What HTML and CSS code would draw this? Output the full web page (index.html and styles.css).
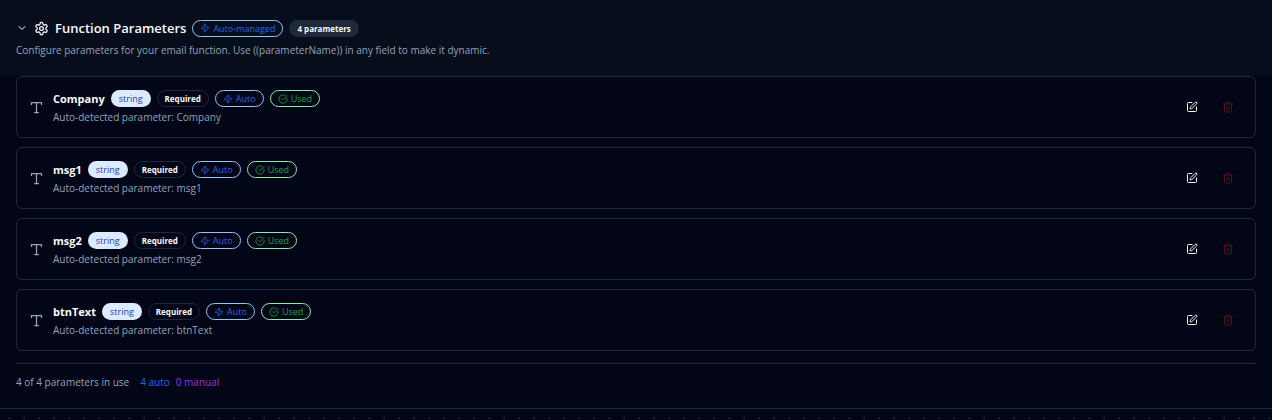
FILE: index.html
```html
<!DOCTYPE html>
<html lang="en">
<head>
    <meta charset="UTF-8">
    <title>Function Parameters</title>
    <meta name="viewport" content="width=device-width, initial-scale=1.0">
    <link rel="stylesheet" href="styles.css">
</head>
<body>

    <!-- Shared icons -->
    <svg class="sprite" aria-hidden="true">
        <symbol id="icon-chevron" viewBox="0 0 24 24"><path d="m6 9 6 6 6-6"/></symbol>
        <symbol id="icon-settings" viewBox="0 0 24 24">
            <path d="M12.22 2h-.44a2 2 0 0 0-2 2v.18a2 2 0 0 1-1 1.73l-.43.25a2 2 0 0 1-2 0l-.15-.08a2 2 0 0 0-2.73.73l-.22.38a2 2 0 0 0 .73 2.73l.15.1a2 2 0 0 1 1 1.72v.51a2 2 0 0 1-1 1.74l-.15.09a2 2 0 0 0-.73 2.73l.22.38a2 2 0 0 0 2.73.73l.15-.08a2 2 0 0 1 2 0l.43.25a2 2 0 0 1 1 1.73V20a2 2 0 0 0 2 2h.44a2 2 0 0 0 2-2v-.18a2 2 0 0 1 1-1.73l.43-.25a2 2 0 0 1 2 0l.15.08a2 2 0 0 0 2.73-.73l.22-.39a2 2 0 0 0-.73-2.73l-.15-.08a2 2 0 0 1-1-1.74v-.5a2 2 0 0 1 1-1.74l.15-.09a2 2 0 0 0 .73-2.73l-.22-.38a2 2 0 0 0-2.73-.73l-.15.08a2 2 0 0 1-2 0l-.43-.25a2 2 0 0 1-1-1.73V4a2 2 0 0 0-2-2z"/>
            <circle cx="12" cy="12" r="3"/>
        </symbol>
        <symbol id="icon-zap" viewBox="0 0 24 24"><path d="M4 14a1 1 0 0 1-.78-1.63l9.9-10.2a.5.5 0 0 1 .86.46l-1.92 6.02A1 1 0 0 0 13 10h7a1 1 0 0 1 .78 1.63l-9.9 10.2a.5.5 0 0 1-.86-.46l1.92-6.02A1 1 0 0 0 11 14z"/></symbol>
        <symbol id="icon-check" viewBox="0 0 24 24"><path d="M21.801 10A10 10 0 1 1 17 3.335"/><path d="m9 11 3 3L22 4"/></symbol>
        <symbol id="icon-type" viewBox="0 0 24 24"><path d="M4 7V4h16v3"/><path d="M9 20h6"/><path d="M12 4v16"/></symbol>
        <symbol id="icon-edit" viewBox="0 0 24 24">
            <path d="M12 3H5a2 2 0 0 0-2 2v14a2 2 0 0 0 2 2h14a2 2 0 0 0 2-2v-7"/>
            <path d="M18.375 2.625a1 1 0 0 1 3 3l-9.013 9.014a2 2 0 0 1-.853.505l-2.873.84a.5.5 0 0 1-.62-.62l.84-2.873a2 2 0 0 1 .506-.852z"/>
        </symbol>
        <symbol id="icon-trash" viewBox="0 0 24 24">
            <path d="M3 6h18"/><path d="M19 6v14c0 1-1 2-2 2H7c-1 0-2-1-2-2V6"/>
            <path d="M8 6V4c0-1 1-2 2-2h4c1 0 2 1 2 2v2"/><path d="M10 11v6"/><path d="M14 11v6"/>
        </symbol>
    </svg>

    <section class="panel">
        <header class="panel-header">
            <div class="title-row">
                <button class="toggle" aria-label="Collapse"><svg class="icon"><use href="#icon-chevron"/></svg></button>
                <svg class="icon icon-settings"><use href="#icon-settings"/></svg>
                <h1>Function Parameters</h1>
                <span class="badge badge-auto"><svg class="icon icon-badge"><use href="#icon-zap"/></svg>Auto-managed</span>
                <span class="badge badge-count">4 parameters</span>
            </div>
            <p class="description">Configure parameters for your email function. Use ((parameterName)) in any field to make it dynamic.</p>
        </header>

        <div class="panel-content">
            <ul class="parameters">
                <li class="parameter">
                    <svg class="icon icon-type"><use href="#icon-type"/></svg>
                    <div class="details">
                        <div class="name-row">
                            <h2>Company</h2>
                            <span class="badge badge-type">string</span>
                            <span class="badge badge-required">Required</span>
                            <span class="badge badge-auto"><svg class="icon icon-badge"><use href="#icon-zap"/></svg>Auto</span>
                            <span class="badge badge-used"><svg class="icon icon-badge"><use href="#icon-check"/></svg>Used</span>
                        </div>
                        <p>Auto-detected parameter: Company</p>
                    </div>
                    <div class="actions">
                        <button aria-label="Edit Company"><svg class="icon"><use href="#icon-edit"/></svg></button>
                        <button class="delete" aria-label="Delete Company" disabled><svg class="icon"><use href="#icon-trash"/></svg></button>
                    </div>
                </li>
                <li class="parameter">
                    <svg class="icon icon-type"><use href="#icon-type"/></svg>
                    <div class="details">
                        <div class="name-row">
                            <h2>msg1</h2>
                            <span class="badge badge-type">string</span>
                            <span class="badge badge-required">Required</span>
                            <span class="badge badge-auto"><svg class="icon icon-badge"><use href="#icon-zap"/></svg>Auto</span>
                            <span class="badge badge-used"><svg class="icon icon-badge"><use href="#icon-check"/></svg>Used</span>
                        </div>
                        <p>Auto-detected parameter: msg1</p>
                    </div>
                    <div class="actions">
                        <button aria-label="Edit msg1"><svg class="icon"><use href="#icon-edit"/></svg></button>
                        <button class="delete" aria-label="Delete msg1" disabled><svg class="icon"><use href="#icon-trash"/></svg></button>
                    </div>
                </li>
                <li class="parameter">
                    <svg class="icon icon-type"><use href="#icon-type"/></svg>
                    <div class="details">
                        <div class="name-row">
                            <h2>msg2</h2>
                            <span class="badge badge-type">string</span>
                            <span class="badge badge-required">Required</span>
                            <span class="badge badge-auto"><svg class="icon icon-badge"><use href="#icon-zap"/></svg>Auto</span>
                            <span class="badge badge-used"><svg class="icon icon-badge"><use href="#icon-check"/></svg>Used</span>
                        </div>
                        <p>Auto-detected parameter: msg2</p>
                    </div>
                    <div class="actions">
                        <button aria-label="Edit msg2"><svg class="icon"><use href="#icon-edit"/></svg></button>
                        <button class="delete" aria-label="Delete msg2" disabled><svg class="icon"><use href="#icon-trash"/></svg></button>
                    </div>
                </li>
                <li class="parameter">
                    <svg class="icon icon-type"><use href="#icon-type"/></svg>
                    <div class="details">
                        <div class="name-row">
                            <h2>btnText</h2>
                            <span class="badge badge-type">string</span>
                            <span class="badge badge-required">Required</span>
                            <span class="badge badge-auto"><svg class="icon icon-badge"><use href="#icon-zap"/></svg>Auto</span>
                            <span class="badge badge-used"><svg class="icon icon-badge"><use href="#icon-check"/></svg>Used</span>
                        </div>
                        <p>Auto-detected parameter: btnText</p>
                    </div>
                    <div class="actions">
                        <button aria-label="Edit btnText"><svg class="icon"><use href="#icon-edit"/></svg></button>
                        <button class="delete" aria-label="Delete btnText" disabled><svg class="icon"><use href="#icon-trash"/></svg></button>
                    </div>
                </li>
            </ul>

            <footer class="summary">
                <span class="in-use">4 of 4 parameters in use</span>
                <span class="auto">4 auto</span>
                <span class="manual">0 manual</span>
            </footer>
        </div>
    </section>

</body>
</html>
```
FILE: styles.css
```css
* {
    box-sizing: border-box;
}

body {
    font-family: 'Segoe UI', 'Open Sans', sans-serif;
    font-size: 10px;
    line-height: 16px;
    color: #f8fafc;
    background-color: #020617;
    background-image: radial-gradient(circle, #1e293b 1px, transparent 1px);
    background-size: 15px 15px;
    background-position: 2px 6px;
    margin: 0;
    overflow-x: hidden;
}

h1, h2, p, ul {
    margin: 0;
    padding: 0;
}

button {
    display: flex;
    align-items: center;
    justify-content: center;
    padding: 0;
    border: none;
    background: none;
    color: inherit;
    cursor: pointer;
}

.sprite {
    display: none;
}

.icon {
    width: 12px;
    height: 12px;
    flex-shrink: 0;
    fill: none;
    stroke: currentColor;
    stroke-width: 2;
    stroke-linecap: round;
    stroke-linejoin: round;
}

.panel {
    margin: 0 -6px;
    background: #020617;
    border: 1px solid #1e293b;
    border-top: none;
    border-radius: 0 0 8px 8px;
}

.panel-header {
    padding: 18px 21px;
    background: #070d1b;
}

.title-row {
    display: flex;
    align-items: center;
    gap: 6px;
    height: 20px;
}

.toggle {
    width: 12px;
    height: 12px;
}

.icon-settings {
    width: 15px;
    height: 15px;
}

h1 {
    font-size: 13px;
    line-height: 20px;
    font-weight: 600;
}

.description {
    margin-top: 4px;
    color: #94a3b8;
}

.badge {
    display: inline-flex;
    align-items: center;
    gap: 3px;
    height: 17px;
    padding: 0 7px;
    border: 1px solid transparent;
    border-radius: 9px;
    font-size: 9px;
    line-height: 15px;
}

.icon-badge {
    width: 10px;
    height: 10px;
}

.badge-count {
    background: #1e293b;
    font-size: 8px;
    font-weight: 700;
}

.badge-type {
    background: #dbeafe;
    color: #1e40af;
}

.badge-required {
    border-color: #1e293b;
    font-size: 8px;
    font-weight: 700;
}

.badge-auto {
    border-color: #93c5fd;
    color: #2563eb;
}

.badge-used {
    border-color: #86efac;
    color: #16a34a;
}

.panel-content {
    padding: 0 21px 18px;
}

.parameters {
    display: flex;
    flex-direction: column;
    gap: 9px;
    list-style: none;
}

.parameter {
    display: flex;
    align-items: center;
    gap: 9px;
    padding: 12px 13px 12px 12px;
    border: 1px solid #1e293b;
    border-radius: 6px;
}

.icon-type {
    width: 15px;
    height: 15px;
    color: #94a3b8;
}

.details {
    flex: 1;
}

.name-row {
    display: flex;
    align-items: center;
    gap: 6px;
    height: 19px;
}

h2 {
    font-size: 11px;
    line-height: 19px;
    font-weight: 700;
}

.details p {
    margin-top: 1px;
    color: #94a3b8;
}

.actions {
    display: flex;
    gap: 8px;
}

.actions button {
    width: 28px;
    height: 28px;
}

.delete {
    color: #7f1d1d;
    opacity: 0.6;
    cursor: default;
}

.summary {
    display: flex;
    gap: 6px;
    margin-top: 12px;
    padding-top: 10px;
    border-top: 1px solid #1e293b;
}

.in-use {
    margin-right: 5px;
    color: #94a3b8;
}

.auto {
    color: #2563eb;
}

.manual {
    color: #9333ea;
}
```
